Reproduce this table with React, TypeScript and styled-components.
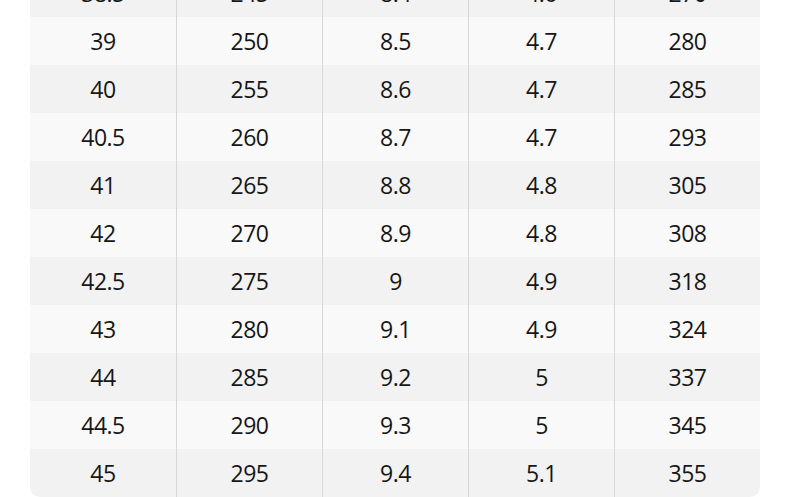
import React from "react";
import styled, { createGlobalStyle } from "styled-components";

const Global = createGlobalStyle`
  html, body { margin: 0; padding: 0; background: #ffffff; }
  body { font-family: "Open Sans", "Noto Sans", sans-serif; overflow: hidden; }
`;

const Page = styled.div`
  width: 790px;
  height: 497px;
  overflow: hidden;
  padding: 0 30px;
  box-sizing: border-box;
`;

const Table = styled.div`
  margin-top: -31px;
  width: 730px;
  border-radius: 0 0 10px 10px;
  overflow: hidden;
`;

const Row = styled.div<{ $dark: boolean }>`
  display: grid;
  grid-template-columns: repeat(5, 146px);
  height: 48px;
  background: ${(p) => (p.$dark ? "#f2f2f2" : "#f9f9f9")};
`;

const Cell = styled.div<{ $first: boolean }>`
  display: flex;
  align-items: center;
  justify-content: center;
  font-size: 23px;
  letter-spacing: -0.5px;
  padding-bottom: 1px;
  color: #161616;
  border-left: ${(p) => (p.$first ? "none" : "1px solid #d7d7d7")};
`;

const rows: string[][] = [
  ["38.5", "245", "8.4", "4.6", "270"],
  ["39", "250", "8.5", "4.7", "280"],
  ["40", "255", "8.6", "4.7", "285"],
  ["40.5", "260", "8.7", "4.7", "293"],
  ["41", "265", "8.8", "4.8", "305"],
  ["42", "270", "8.9", "4.8", "308"],
  ["42.5", "275", "9", "4.9", "318"],
  ["43", "280", "9.1", "4.9", "324"],
  ["44", "285", "9.2", "5", "337"],
  ["44.5", "290", "9.3", "5", "345"],
  ["45", "295", "9.4", "5.1", "355"],
];

export default function App() {
  return (
    <>
      <Global />
      <Page>
        <Table>
          {rows.map((r, i) => (
            <Row key={i} $dark={i % 2 === 0}>
              {r.map((c, j) => (
                <Cell key={j} $first={j === 0}>
                  {c}
                </Cell>
              ))}
            </Row>
          ))}
        </Table>
      </Page>
    </>
  );
}
